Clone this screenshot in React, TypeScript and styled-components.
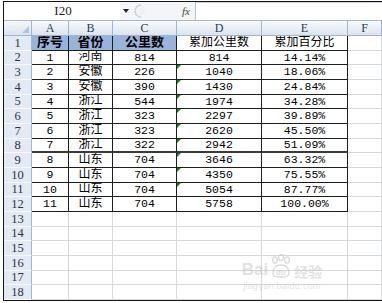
import React from "react";
import styled, { createGlobalStyle } from "styled-components";

const GlobalStyle = createGlobalStyle`
  html, body {
    margin: 0;
    padding: 0;
    background: #fff;
  }
  body {
    width: 382px;
    height: 303px;
    overflow: hidden;
  }
`;

const Page = styled.div`
  position: relative;
  width: 382px;
  height: 303px;
  padding: 1px 0 0 3px;
  box-sizing: border-box;
  background: #fff;
  overflow: hidden;
`;

const Frame = styled.div`
  height: 300px;
  border: 1px solid #151515;
  border-right: none;
  box-sizing: border-box;
  display: flex;
  flex-direction: column;
  background: #fff;
`;

const FormulaBar = styled.div`
  height: 19px;
  flex: none;
  display: flex;
  align-items: stretch;
  border-bottom: 1px solid #a9b8cc;
  box-sizing: border-box;
  background: #f3f5f9;

  .name-box {
    width: 114px;
    display: flex;
    align-items: center;
    justify-content: center;
    background: #fff;
    font-family: "Liberation Serif", serif;
    font-size: 13px;
    color: #222;
    padding-left: 2px;
  }

  .tools {
    width: 75px;
    display: flex;
    align-items: center;
  }

  .arrow {
    margin-left: 3px;
    width: 0;
    height: 0;
    border-left: 3px solid transparent;
    border-right: 3px solid transparent;
    border-top: 4px solid #222;
  }

  .fx {
    margin-left: 36px;
    font-family: "Liberation Serif", serif;
    font-style: italic;
    font-size: 11px;
    color: #444;
  }

  .input {
    flex: 1;
    background: #fff;
    border-left: 1px solid #b5c2d4;
    border-top: 1px solid #c9d3e0;
  }
`;

const Sheet = styled.div`
  flex: 1;
  display: grid;
  grid-template-columns: 28px 37px 44px 64px 85px 86px 1fr;
  grid-template-rows: 15px repeat(18, 1fr);
`;

const Corner = styled.div`
  position: relative;
  background: linear-gradient(#f6f8fb, #dbe3ee);
  border-right: 1px solid #9eb6ce;
  border-bottom: 1px solid #9eb6ce;
  box-sizing: border-box;

  &::after {
    content: "";
    position: absolute;
    right: 2px;
    bottom: 2px;
    border-left: 7px solid transparent;
    border-bottom: 7px solid #b4c3d6;
  }
`;

const ColHead = styled.div`
  display: flex;
  align-items: center;
  justify-content: center;
  background: linear-gradient(#f8fafc, #dde4ee);
  border-right: 1px solid #9eb6ce;
  border-bottom: 1px solid #9eb6ce;
  box-sizing: border-box;
  font-family: "Liberation Serif", serif;
  font-size: 12px;
  color: #2b3a4d;
  line-height: 1;
`;

const RowHead = styled.div`
  display: flex;
  align-items: center;
  justify-content: center;
  background: #e3eaf4;
  border-right: 1px solid #9eb6ce;
  border-bottom: 1px solid #f6f8fb;
  box-sizing: border-box;
  font-family: "Liberation Serif", serif;
  font-size: 12.5px;
  color: #2b3440;
  line-height: 1;
`;

const Cell = styled.div<{
  $inTable?: boolean;
  $fill?: boolean;
  $bold?: boolean;
  $size?: number;
  $thick?: boolean;
  $flag?: boolean;
}>`
  position: relative;
  display: flex;
  align-items: center;
  justify-content: center;
  box-sizing: border-box;
  overflow: hidden;
  white-space: nowrap;
  background: ${(p) => (p.$fill ? "#99b4da" : "#fff")};
  border-right: 1px solid ${(p) => (p.$inTable ? "#1d1d1d" : "#d6d9de")};
  border-bottom: ${(p) => (p.$thick ? "2px solid #3a3a3a" : `1px solid ${p.$inTable ? "#1d1d1d" : "#d6d9de"}`)};
  font-family: "Liberation Mono", "Noto Sans CJK SC", monospace;
  font-size: ${(p) => p.$size ?? 11.5}px;
  font-weight: ${(p) => (p.$bold ? 700 : 400)};
  color: #000;
  line-height: 1;

  ${(p) =>
    p.$flag &&
    `
    &::before {
      content: "";
      position: absolute;
      left: 0;
      top: 0;
      border-top: 4px solid #1f7a2e;
      border-right: 4px solid transparent;
    }
  `}
`;

const Watermark = styled.div`
  position: absolute;
  left: 230px;
  top: 254px;
  width: 104px;
  display: flex;
  flex-direction: column;
  align-items: center;
  pointer-events: none;
  color: rgba(195, 195, 195, 0.5);

  .brand {
    display: flex;
    align-items: flex-end;
    gap: 2px;
    font-family: "Liberation Sans", sans-serif;
    font-weight: 700;
    font-size: 17px;
    line-height: 1;
  }

  .cn {
    font-family: "Noto Sans CJK SC", sans-serif;
    font-size: 14px;
  }

  .url {
    margin-top: 3px;
    font-family: "Liberation Sans", sans-serif;
    font-size: 9px;
    letter-spacing: 0.3px;
  }
`;

const Paw = () => (
  <svg width="22" height="24" viewBox="0 0 22 24">
    <g fill="none" stroke="rgba(190,190,190,0.55)" strokeWidth="1.3">
      <ellipse cx="5" cy="6" rx="2.4" ry="3" />
      <ellipse cx="11" cy="3.5" rx="2.4" ry="3" />
      <ellipse cx="17" cy="6" rx="2.4" ry="3" />
      <path d="M3 20 Q3 11 11 11 Q19 11 19 20 Q19 23 11 23 Q3 23 3 20 Z" />
    </g>
    <text x="11" y="21" textAnchor="middle" fontSize="8" fontFamily="Liberation Sans, sans-serif" fontWeight="700" fill="rgba(190,190,190,0.55)">
      du
    </text>
  </svg>
);

const columns = ["A", "B", "C", "D", "E", "F"];

const header = ["序号", "省份", "公里数", "累加公里数", "累加百分比"];

const data: (string | number)[][] = [
  [1, "河南", 814, 814, "14.14%"],
  [2, "安徽", 226, 1040, "18.06%"],
  [3, "安徽", 390, 1430, "24.84%"],
  [4, "浙江", 544, 1974, "34.28%"],
  [5, "浙江", 323, 2297, "39.89%"],
  [6, "浙江", 323, 2620, "45.50%"],
  [7, "浙江", 322, 2942, "51.09%"],
  [8, "山东", 704, 3646, "63.32%"],
  [9, "山东", 704, 4350, "75.55%"],
  [10, "山东", 704, 5054, "87.77%"],
  [11, "山东", 704, 5758, "100.00%"],
];

export default function App() {
  const rows: React.ReactNode[] = [];

  for (let r = 1; r <= 18; r++) {
    rows.push(<RowHead key={`h${r}`}>{r}</RowHead>);
    for (let c = 0; c < 6; c++) {
      const key = `${r}-${c}`;
      const inTable = r <= 12 && c < 5;
      if (r === 1 && c < 5) {
        rows.push(
          <Cell key={key} $inTable $fill={c < 3} $bold={c < 3} $size={c < 3 ? 13 : 12}>
            {header[c]}
          </Cell>
        );
      } else if (inTable) {
        const v = data[r - 2][c];
        rows.push(
          <Cell
            key={key}
            $inTable
            $thick={r === 8}
            $size={c === 1 ? 12 : undefined}
            $flag={c === 3 && r >= 3 && r <= 11}
          >
            {v}
          </Cell>
        );
      } else {
        rows.push(<Cell key={key} />);
      }
    }
  }

  return (
    <>
      <GlobalStyle />
      <Page>
        <Frame>
          <FormulaBar>
            <div className="name-box">I20</div>
            <div className="tools">
              <span className="arrow" />
              <svg width="12" height="14" viewBox="0 0 12 14" style={{ marginLeft: 5 }}>
                <path d="M7 1 A6 6 0 0 0 7 13" fill="none" stroke="#c9d2de" strokeWidth="1.5" />
                <circle cx="8" cy="7" r="4" fill="#eef2f7" />
              </svg>
              <span className="fx">fx</span>
            </div>
            <div className="input" />
          </FormulaBar>
          <Sheet>
            <Corner />
            {columns.map((c) => (
              <ColHead key={c}>{c}</ColHead>
            ))}
            {rows}
          </Sheet>
        </Frame>
        <Watermark>
          <div className="brand">
            <span>Bai</span>
            <Paw />
            <span className="cn">经验</span>
          </div>
          <div className="url">jingyan.baidu.com</div>
        </Watermark>
      </Page>
    </>
  );
}
